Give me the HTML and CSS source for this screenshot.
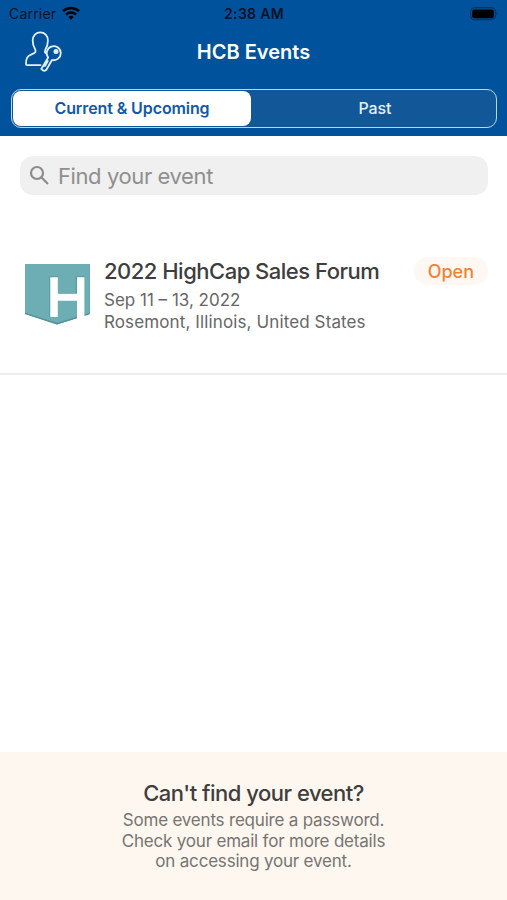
FILE: index.html
```html
<!DOCTYPE html>
<html lang="en">
<head>
<meta charset="utf-8">
<title>HCB Events</title>
<link rel="stylesheet" href="styles.css">
</head>
<body>
<header class="header">
  <div class="status-bar">
    <div class="carrier">
      <span>Carrier</span>
      <svg class="wifi" width="18" height="14" viewBox="0 0 18 14" fill="none" stroke="#000" stroke-width="2.5">
        <path d="M1 5.2a11.5 11.5 0 0 1 16 0"/>
        <path d="M4 8.6a7.2 7.2 0 0 1 10 0"/>
        <path d="M9 13.8L6.3 11a3.8 3.8 0 0 1 5.4 0z" fill="#000" stroke="none"/>
      </svg>
    </div>
    <span class="time">2:38 AM</span>
    <svg class="battery" width="29" height="14" viewBox="0 0 29 14">
      <rect x=".7" y=".7" width="24.6" height="12" rx="3.5" fill="none" stroke="#002d59" stroke-width="1"/>
      <rect x="2.2" y="2.4" width="21.6" height="8.8" rx="2" fill="#000"/>
      <path d="M26.6 4.6q2.2 2 0 4.2z" fill="#002d59"/>
    </svg>
  </div>
  <div class="nav">
    <svg class="login" width="40" height="44" viewBox="0 0 40 44" fill="none" stroke="#e3f1ff" stroke-width="1.8" stroke-linecap="round" stroke-linejoin="round">
      <path d="M17.5 36.2H4.2q-1.200 0-1.200-1.200c0-5.500 1-7.800 5.500-9.600 3.800-1.500 5-2.500 3.600-5.200-1.700-2.600-2.400-5.200-2.400-8.700 0-4.900 3.300-8.100 7.600-8.100s7.600 3.200 7.600 8.100c0 3.500-.6 6.200-2.500 9-.8 1.500-.7 2.700.3 3.800"/>
      <path d="M29 31L23.200 41q-2.800 1.800-4.900-1l6.900-11.500a7 7 0 1 1 3.800 2.500z"/>
      <path d="M24.800 32l-2.900 5"/>
      <circle cx="33" cy="22.600" r="1.600" fill="#e3f1ff"/>
    </svg>
    <h1>HCB Events</h1>
  </div>
  <div class="tabs">
    <div class="tab active"><span>Current &amp; Upcoming</span></div>
    <div class="tab"><span>Past</span></div>
  </div>
</header>

<main>
  <div class="search">
    <svg width="22" height="22" viewBox="0 0 22 22" fill="none" stroke="#8c8c8c" stroke-width="2.200">
      <circle cx="8" cy="8" r="6"/>
      <path d="M12.300 12.300l6.700 6.700"/>
    </svg>
    <span>Find your event</span>
  </div>

  <div class="event">
    <svg class="logo" width="66" height="62" viewBox="0 0 66 62">
      <path d="M0 0h65v50L32 60.500 0 50z" fill="#6dadb4"/>
      <path d="M0 48.800L32 59l33-10.200V50L32 60.500 0 50z" fill="#518e98"/>
      <path d="M24.900 53V12.900h8M51.500 30V12.900h8M33.500 29.500h18" fill="none" stroke="#5a99a2" stroke-width="1.200"/>
      <path d="M25.300 13.200h7.500v16.600H52V13.200h7.400V54l-7.400 3V36.800H32.800V53h-7.500z" fill="#fff"/>
      <path d="M64.500 0v50" stroke="#64a3ab"/>
    </svg>
    <div class="event-info">
      <h2>2022 HighCap Sales Forum</h2>
      <p class="date">Sep 11 – 13, 2022</p>
      <p class="place">Rosemont, Illinois, United States</p>
    </div>
    <span class="badge">Open</span>
  </div>
</main>

<footer class="help">
  <h2>Can't find your event?</h2>
  <p>Some events require a password.</p>
  <p>Check your email for more details</p>
  <p>on accessing your event.</p>
</footer>
</body>
</html>
```
FILE: styles.css
```css
* {
  box-sizing: border-box;
}
body {
  margin: 0;
  height: 900px;
  display: flex;
  flex-direction: column;
  background: #fff;
  font-family: Inter, "Liberation Sans", sans-serif;
  white-space: nowrap;
}
h1, h2, p {
  margin: 0;
  font-weight: 500;
}

/* blue header */
.header {
  height: 136px;
  background: #00529c;
  color: #fff;
}
.status-bar {
  height: 28px;
  padding: 0 8px 0 9px;
  display: grid;
  grid-template-columns: 1fr auto 1fr;
  align-items: center;
  color: #001226;
  font-size: 14px;
  line-height: 28px;
}
.carrier {
  display: flex;
  align-items: center;
  gap: 6px;
  letter-spacing: .2px;
}
.wifi {
  margin-top: -2px;
}
.time {
  font-weight: 600;
  letter-spacing: .3px;
}
.battery {
  justify-self: end;
}
.nav {
  height: 61px;
  padding: 1px 23px 0;
  display: grid;
  grid-template-columns: 1fr auto 1fr;
}
.nav h1 {
  font-size: 20px;
  font-weight: 600;
  line-height: 47px;
}
.tabs {
  height: 39px;
  margin: 0 10px 0 11px;
  padding: 1px;
  display: grid;
  grid-template-columns: 238px 1fr;
  background: #125797;
  border: 1.500px solid #b5d8f6;
  border-radius: 10px;
}
.tab {
  padding-left: 4px;
  text-align: center;
  color: #e3f1ff;
  font-size: 16px;
  font-weight: 500;
  line-height: 35px;
  letter-spacing: -.1px;
}
.tab.active {
  padding-left: 0;
  background: #fff;
  border-radius: 8px;
  color: #1258a6;
  font-weight: 600;
}

/* search field */
.search {
  height: 39px;
  margin: 20px 19px 0 20px;
  padding-left: 9px;
  display: flex;
  align-items: center;
  gap: 7px;
  background: #f0f0f0;
  border-radius: 13px;
  color: #8f8f8f;
  font-size: 22px;
  line-height: 38px;
  letter-spacing: -.4px;
}

/* event row */
.event {
  height: 180px;
  padding: 62px 19px 0 25px;
  display: flex;
  align-items: flex-start;
  border-bottom: 2px solid #ededed;
}
.logo {
  margin-top: 7px;
}
.event-info {
  flex: 1;
  margin-left: 13px;
  color: #666;
}
.event-info h2 {
  color: #3d3d3d;
  font-size: 22px;
  line-height: 29px;
  letter-spacing: -.5px;
}
.event-info p {
  font-size: 17px;
  font-weight: 400;
  line-height: 22px;
}
.event-info .date {
  margin-top: 3px;
}
.event-info .place {
  letter-spacing: .12px;
}
.badge {
  height: 28px;
  padding: 0 14px;
  border-radius: 14px;
  background: #fff7f1;
  color: #f28232;
  font-size: 18px;
  font-weight: 500;
  line-height: 29px;
}

/* help panel at the bottom */
.help {
  height: 148px;
  margin-top: auto;
  padding-top: 26px;
  background: #fdf7f0;
  text-align: center;
  color: #777471;
}
.help h2 {
  margin-bottom: 2px;
  color: #403e3c;
  font-size: 22px;
  line-height: 30px;
  letter-spacing: -.5px;
}
.help p {
  font-size: 17px;
  font-weight: 400;
  line-height: 20.500px;
  letter-spacing: -.2px;
}
```
